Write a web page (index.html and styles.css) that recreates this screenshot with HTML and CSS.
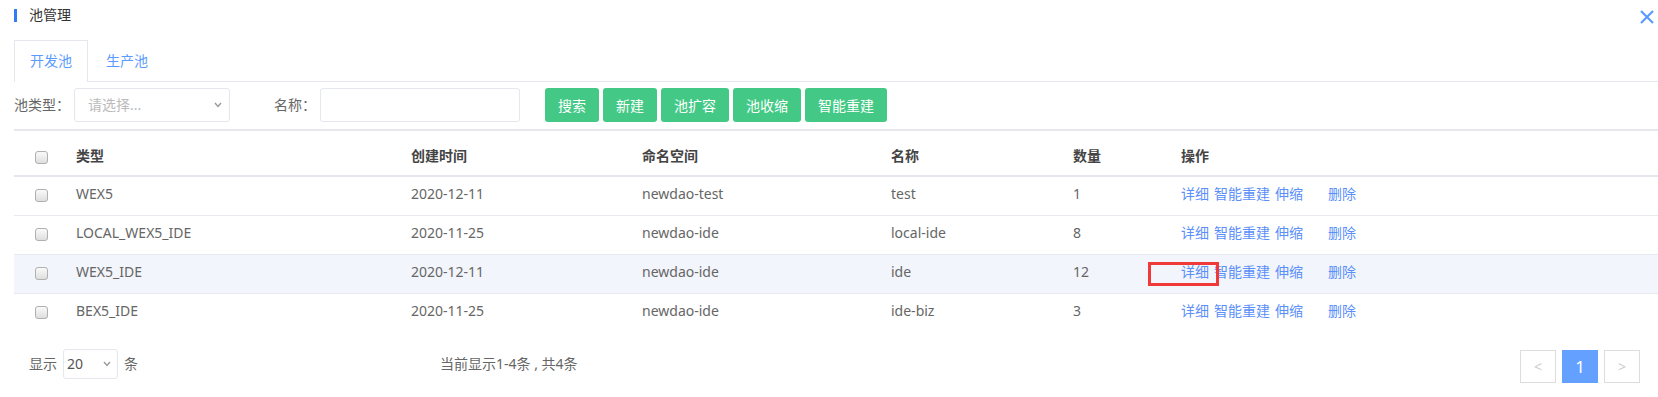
FILE: index.html
```html
<!doctype html>
<html>
  <head>
    <meta charset="utf-8">
    <title>池管理</title>
    <link rel="stylesheet" href="styles.css">
  </head>
  <body>
    <div class="page">
      <div class="title-bar">
        <span class="title-mark"></span>
        <span class="title">池管理</span>
        <svg class="close" width="14" height="14" viewBox="0 0 14 14">
          <path d="M1 1 L13 13 M13 1 L1 13" stroke="#5b9bff" stroke-width="2.2" fill="none"/>
        </svg>
      </div>

      <div class="tabs">
        <div class="tab active">开发池</div>
        <div class="tab">生产池</div>
      </div>

      <div class="toolbar">
        <span class="label">池类型：</span>
        <div class="select">
          <span>请选择...</span>
          <svg class="caret" width="8" height="6" viewBox="0 0 8 6"><path d="M1 1 L4 4.5 L7 1" stroke="#999" stroke-width="1.4" fill="none"/></svg>
        </div>
        <span class="label name-label">名称：</span>
        <div class="input"></div>
        <div class="buttons">
          <button class="btn">搜索</button>
          <button class="btn">新建</button>
          <button class="btn">池扩容</button>
          <button class="btn">池收缩</button>
          <button class="btn">智能重建</button>
        </div>
      </div>

      <table class="grid">
        <colgroup>
          <col class="c-check">
          <col class="c-type">
          <col class="c-date">
          <col class="c-ns">
          <col class="c-name">
          <col class="c-count">
          <col>
        </colgroup>
        <thead>
          <tr>
            <th class="check-cell"><span class="check"></span></th>
            <th>类型</th>
            <th>创建时间</th>
            <th>命名空间</th>
            <th>名称</th>
            <th>数量</th>
            <th>操作</th>
          </tr>
        </thead>
        <tbody>
          <tr>
            <td class="check-cell"><span class="check"></span></td>
            <td>WEX5</td>
            <td>2020-12-11</td>
            <td>newdao-test</td>
            <td>test</td>
            <td>1</td>
            <td><div class="ops"><a>详细</a><a>智能重建</a><a>伸缩</a><a class="del">删除</a></div></td>
          </tr>
          <tr>
            <td class="check-cell"><span class="check"></span></td>
            <td>LOCAL_WEX5_IDE</td>
            <td>2020-11-25</td>
            <td>newdao-ide</td>
            <td>local-ide</td>
            <td>8</td>
            <td><div class="ops"><a>详细</a><a>智能重建</a><a>伸缩</a><a class="del">删除</a></div></td>
          </tr>
          <tr class="hover">
            <td class="check-cell"><span class="check"></span></td>
            <td>WEX5_IDE</td>
            <td>2020-12-11</td>
            <td>newdao-ide</td>
            <td>ide</td>
            <td>12</td>
            <td class="marked"><div class="ops"><a>详细</a><a>智能重建</a><a>伸缩</a><a class="del">删除</a></div><span class="mark-box"></span></td>
          </tr>
          <tr>
            <td class="check-cell"><span class="check"></span></td>
            <td>BEX5_IDE</td>
            <td>2020-11-25</td>
            <td>newdao-ide</td>
            <td>ide-biz</td>
            <td>3</td>
            <td><div class="ops"><a>详细</a><a>智能重建</a><a>伸缩</a><a class="del">删除</a></div></td>
          </tr>
        </tbody>
      </table>

      <div class="footer">
        <div class="page-size">
          <span>显示</span>
          <div class="size-select">
            <span>20</span>
            <svg class="caret" width="8" height="6" viewBox="0 0 8 6"><path d="M1 1 L4 4.5 L7 1" stroke="#999" stroke-width="1.4" fill="none"/></svg>
          </div>
          <span>条</span>
        </div>
        <div class="info">当前显示1-4条 , 共4条</div>
        <div class="pager">
          <span class="pg">&lt;</span>
          <span class="pg current">1</span>
          <span class="pg">&gt;</span>
        </div>
      </div>
    </div>
  </body>
</html>
```

FILE: styles.css
```css
* {
  box-sizing: border-box;
}
html,
body {
  margin: 0;
  padding: 0;
  background: #fff;
}
body {
  font-family: "Noto Sans", "Noto Sans CJK SC", sans-serif;
  font-size: 14px;
  line-height: 20px;
  color: #666;
}
.page {
  padding-left: 14px;
}

/* title */
.title-bar {
  display: flex;
  align-items: center;
  height: 30px;
  padding-right: 4px;
}
.title-mark {
  width: 3px;
  height: 13px;
  background: #2f7cf6;
  margin-right: 12px;
}
.title {
  color: #333;
}
.close {
  margin-left: auto;
  align-self: flex-start;
  margin-top: 10px;
}

/* tabs */
.tabs {
  display: flex;
  margin-top: 10px;
  border-bottom: 1px solid #e4e7ed;
}
.tab {
  height: 41px;
  line-height: 40px;
  padding: 0 15px;
  margin-right: 2px;
  margin-bottom: -1px;
  border: 1px solid transparent;
  border-bottom: none;
  color: #5b9bff;
}
.tab.active {
  height: 42px;
  border-color: #e4e7ed;
  background: #fff;
}

/* toolbar */
.toolbar {
  display: flex;
  align-items: center;
  padding: 6px 0 7px;
  border-bottom: 2px solid #e6e8ee;
}
.label {
  margin-right: 4px;
}
.name-label {
  margin-left: 44px;
}
.select {
  width: 156px;
  height: 34px;
  border: 1px solid #e4e7ed;
  border-radius: 3px;
  padding: 0 7px 0 13px;
  display: flex;
  align-items: center;
  justify-content: space-between;
  color: #bbb;
}
.input {
  width: 200px;
  height: 34px;
  border: 1px solid #e4e7ed;
  border-radius: 3px;
}
.buttons {
  display: flex;
  gap: 4px;
  margin-left: 25px;
}
.btn {
  height: 34px;
  padding: 0 13px;
  border: none;
  border-radius: 3px;
  background: #43c985;
  color: #fff;
  font-family: inherit;
  font-size: 14px;
}

/* table */
.grid {
  width: 100%;
  border-collapse: collapse;
  table-layout: fixed;
}
.c-check { width: 54px; }
.c-type { width: 335px; }
.c-date { width: 231px; }
.c-ns { width: 249px; }
.c-name { width: 182px; }
.c-count { width: 108px; }
.grid th {
  height: 45px;
  text-align: left;
  padding: 6px 8px 0;
  color: #444;
  font-weight: bold;
  border-bottom: 2px solid #e4e7ed;
}
.grid td {
  height: 39px;
  padding: 0 8px 3px;
  border-bottom: 1px solid #e8eaef;
}
.grid tbody tr:last-child td {
  border-bottom: none;
}
.grid tr.hover td {
  background: #f2f5fb;
}
.grid .check-cell {
  text-align: center;
  padding-left: 0;
  padding-right: 0;
}
.check {
  display: inline-block;
  width: 13px;
  height: 13px;
  border: 1px solid #b0b0b0;
  border-radius: 3px;
  background: linear-gradient(#fafafa, #dedede);
  vertical-align: middle;
}
.ops {
  display: flex;
  gap: 5px;
}
.ops a {
  color: #5b8ff9;
}
.ops a.del {
  margin-left: 20px;
}
.marked {
  position: relative;
}
.mark-box {
  position: absolute;
  left: -25px;
  top: 7px;
  width: 71px;
  height: 24px;
  border: 3px solid #f03a3a;
}

/* footer */
.footer {
  display: grid;
  grid-template-columns: 411px 1fr auto;
  align-items: start;
  padding: 17px 18px 0 15px;
}
.page-size {
  display: flex;
  align-items: center;
  gap: 6px;
}
.size-select {
  width: 55px;
  height: 30px;
  border: 1px solid #e4e7ed;
  border-radius: 3px;
  padding: 0 6px 0 3px;
  display: flex;
  align-items: center;
  justify-content: space-between;
  color: #555;
}
.info {
  line-height: 30px;
}
.pager {
  display: flex;
  gap: 6px;
  margin-top: 1px;
}
.pg {
  width: 36px;
  height: 33px;
  border: 1px solid #ddd;
  display: flex;
  align-items: center;
  justify-content: center;
  color: #ccc;
}
.pg.current {
  background: #64a0ff;
  border-color: #64a0ff;
  color: #fff;
  font-size: 17px;
}
```
